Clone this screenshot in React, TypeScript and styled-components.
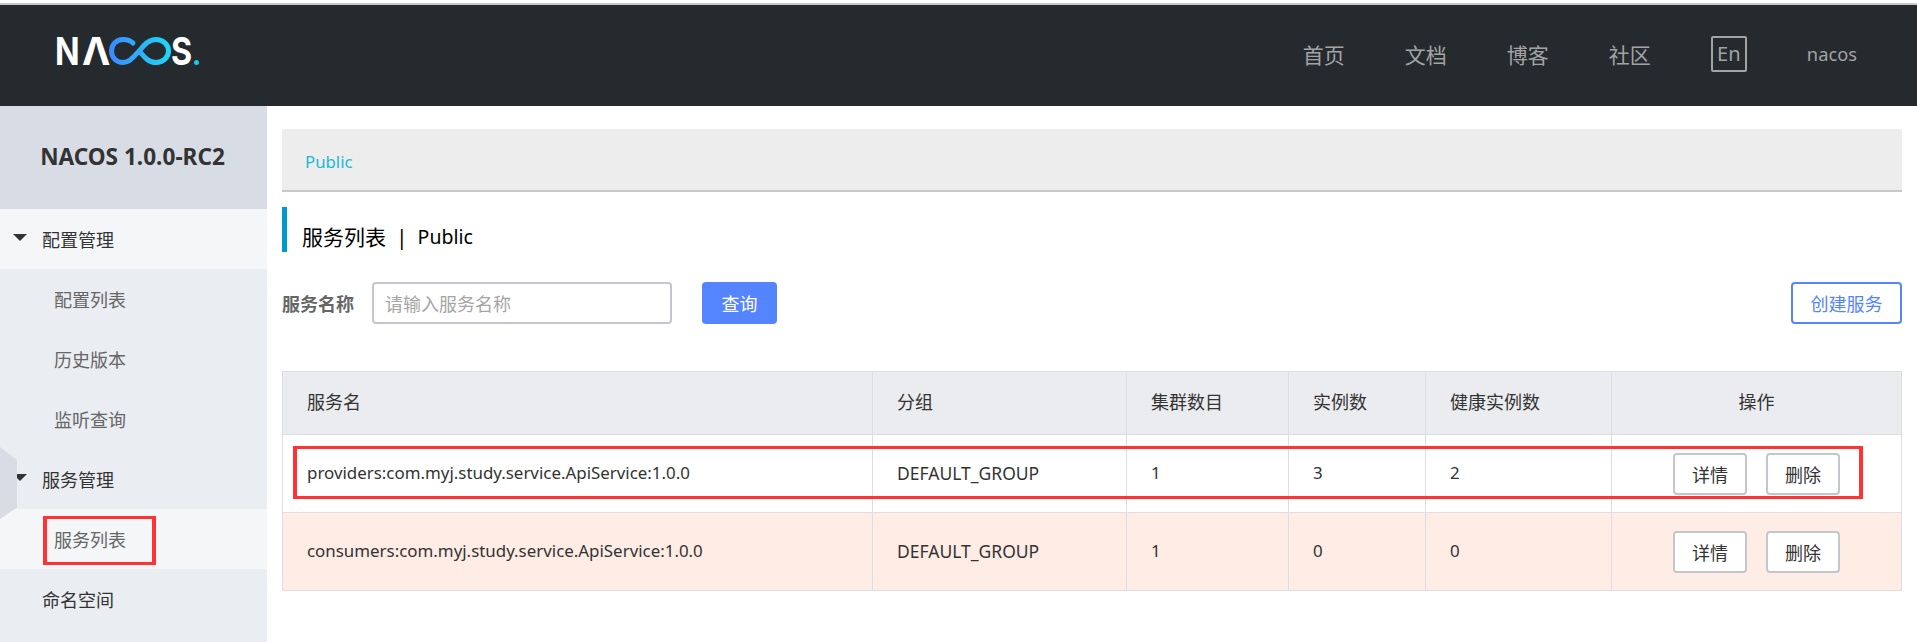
import React from "react";
import styled, { createGlobalStyle } from "styled-components";

const FONT = `"Noto Sans", "Noto Sans CJK SC", sans-serif`;

const Global = createGlobalStyle`
  html, body { margin: 0; padding: 0; background: #fff; }
  body { font-family: ${FONT}; width: 1917px; height: 642px; overflow: hidden; }
  * { box-sizing: border-box; }
`;

const Page = styled.div`
  width: 1917px;
  height: 642px;
  display: flex;
  flex-direction: column;
  padding-top: 3px;
`;
const Header = styled.header`
  height: 103px;
  flex: none;
  background: #252a2f;
  border-top: 2px solid #c8c8c8;
  display: flex;
  align-items: center;
  justify-content: space-between;
  padding: 0 60px 2px 55px;
`;
const Logo = styled.div`
  display: flex;
  align-items: flex-end;
  height: 28px;
  margin-top: -7px;
  color: #fff;
  font-family: "Inter", sans-serif;
  font-weight: 700;
  font-size: 38px;
  line-height: 28px;
`;
const LogoLetter = styled.span<{ $w: number; $sx: number }>`
  display: block;
  width: ${(p) => p.$w}px;
  height: 28px;
  line-height: 28px;
  transform: scaleX(${(p) => p.$sx});
  transform-origin: left center;
`;
const LogoMark = styled.svg`
  display: block;
  width: 62px;
  height: 28px;
  flex: none;
`;
const LogoDot = styled.span`
  width: 5px;
  height: 5px;
  border-radius: 50%;
  background: #19c8ea;
  margin-left: 3px;
`;
const Nav = styled.nav`
  display: flex;
  align-items: center;
  gap: 60px;
  color: #a3a3a3;
  font-size: 21px;
`;
const NavLink = styled.span`
  line-height: 30px;
`;
const LangBox = styled.span`
  width: 36px;
  height: 36px;
  border: 2px solid #a3a3a3;
  border-radius: 2px;
  display: flex;
  align-items: center;
  justify-content: center;
  font-size: 20px;
  margin-top: -2px;
`;
const UserName = styled.span`
  font-size: 18.3px;
  margin-top: -2px;
`;
const Body = styled.div`
  flex: 1;
  display: flex;
  min-height: 0;
`;
const Sidebar = styled.aside`
  width: 267px;
  flex: none;
  background: #eaedf1;
  position: relative;
  display: flex;
  flex-direction: column;
`;
const SideTitle = styled.div`
  height: 103px;
  background: #d8dce5;
  color: #333;
  font-weight: 700;
  font-size: 22.6px;
  display: flex;
  align-items: center;
  justify-content: center;
  padding: 0 2px 2px 0;
`;
const SideGroup = styled.div<{ $open?: boolean }>`
  height: 60px;
  flex: none;
  display: flex;
  align-items: center;
  padding-left: 42px;
  font-size: 18px;
  color: #333;
  background: ${(p) => (p.$open ? "#f4f6f8" : "transparent")};
  position: relative;
`;
const Caret = styled.i`
  position: absolute;
  left: 13px;
  top: 25px;
  width: 0;
  height: 0;
  border-left: 7px solid transparent;
  border-right: 7px solid transparent;
  border-top: 7px solid #333;
`;
const SideItem = styled.div<{ $active?: boolean }>`
  height: 60px;
  flex: none;
  display: flex;
  align-items: center;
  padding-left: 54px;
  font-size: 18px;
  color: #666;
  background: ${(p) => (p.$active ? "#f4f6f8" : "transparent")};
`;
const SideToggle = styled.div`
  position: absolute;
  left: 0;
  top: 341px;
  width: 17px;
  height: 72px;
  background: #d8dce5;
  clip-path: polygon(0 0, 100% 18%, 100% 84%, 0 100%);
`;
const RedMark = styled.div`
  position: absolute;
  border-style: solid;
  border-color: #ff3333;
  border-width: 3px 4px;
  pointer-events: none;
`;
const SideMark = styled(RedMark)`
  left: 43px;
  top: 410px;
  width: 113px;
  height: 49px;
`;
const Main = styled.main`
  flex: 1;
  min-width: 0;
  padding: 23px 15px 0 15px;
  position: relative;
`;
const Breadcrumb = styled.div`
  height: 63px;
  background: #ededed;
  border-bottom: 2px solid #c8c8c8;
  width: 1620px;
  padding: 21px 0 0 23px;
  color: #1eb8d8;
  font-size: 16.8px;
  line-height: 24px;
`;
const Title = styled.h1`
  margin: 15px 0 0;
  height: 45px;
  border-left: 5px solid #0099cc;
  padding: 16px 0 0 15px;
  font-size: 21px;
  font-weight: 400;
  line-height: 28px;
  color: #000;
  display: flex;
  gap: 10px;
`;
const TitleName = styled.span`
  font-size: 19.5px;
`;
const FormRow = styled.div`
  margin-top: 30px;
  width: 1620px;
  height: 42px;
  display: flex;
  align-items: center;
`;
const FieldLabel = styled.label`
  font-size: 18px;
  font-weight: 700;
  color: #666;
  width: 90px;
  flex: none;
`;
const SearchInput = styled.div`
  width: 300px;
  height: 42px;
  border: 2px solid #c4c6cf;
  border-radius: 4px;
  display: flex;
  align-items: center;
  padding-left: 11px;
  color: #a5a5a5;
  font-size: 18px;
`;
const Button = styled.button<{ $variant?: "primary" | "outline" }>`
  height: 42px;
  border-radius: 4px;
  font-family: ${FONT};
  font-size: 18px;
  padding: 0;
  background: ${(p) => (p.$variant === "primary" ? "#5584ff" : "#fff")};
  color: ${(p) => (p.$variant === "primary" ? "#fff" : p.$variant === "outline" ? "#5584ff" : "#333")};
  border: ${(p) => (p.$variant === "primary" ? "none" : p.$variant === "outline" ? "2px solid #5584ff" : "2px solid #c4c6cf")};
`;
const QueryButton = styled(Button)`
  width: 75px;
  margin-left: 30px;
`;
const CreateButton = styled(Button)`
  width: 111px;
  margin-left: auto;
`;
const Table = styled.div`
  margin-top: 47px;
  width: 1620px;
  border: 1px solid #dcdee3;
`;
const TRow = styled.div<{ $head?: boolean; $warn?: boolean }>`
  display: grid;
  grid-template-columns: 590px 254px 162px 137px 186px 1fr;
  height: ${(p) => (p.$head ? 62 : 78)}px;
  border-top: ${(p) => (p.$head ? "none" : "1px solid #dcdee3")};
  background: ${(p) => (p.$head ? "#ebecf0" : p.$warn ? "#ffece4" : "#fff")};
`;
const Cell = styled.div<{ $center?: boolean; $last?: boolean }>`
  display: flex;
  align-items: center;
  justify-content: ${(p) => (p.$center ? "center" : "flex-start")};
  padding: ${(p) => (p.$center ? "0" : "0 0 2px 24px")};
  font-size: 16.9px;
  color: #333;
  border-right: ${(p) => (p.$last ? "none" : "1px solid #dcdee3")};
  white-space: nowrap;
`;
const GroupCell = styled(Cell)`
  font-size: 17.5px;
`;
const HeadCell = styled(Cell)`
  font-size: 18px;
  padding-bottom: 4px;
`;
const Actions = styled(Cell)`
  gap: 19px;
`;
const ActionButton = styled(Button)`
  width: 74px;
`;
const RowMark = styled(RedMark)`
  left: 26px;
  top: 340px;
  width: 1570px;
  height: 53px;
`;

const rows = [
  { name: "providers:com.myj.study.service.ApiService:1.0.0", cluster: 1, inst: 3, healthy: 2 },
  { name: "consumers:com.myj.study.service.ApiService:1.0.0", cluster: 1, inst: 0, healthy: 0, warn: true },
];

export default function App() {
  return (
    <Page>
      <Global />
      <Header>
        <Logo aria-label="NACOS">
          <LogoLetter $w={27} $sx={0.85}>N</LogoLetter>
          <LogoLetter $w={27} $sx={1}>Λ</LogoLetter>
          <LogoMark viewBox="0 0 62 28">
            <defs>
              <linearGradient id="inf" x1="0" x2="1" y1="0" y2="0">
                <stop offset="0" stopColor="#3a8cff" />
                <stop offset="1" stopColor="#1fd6f4" />
              </linearGradient>
            </defs>
            <path
              d="M24 6 C21.5 3.5 18 2.5 14 2.5 C7.5 2.5 2.5 7.5 2.5 14 C2.5 20.5 7.5 25.5 14 25.5 C21 25.5 25 19 31 13 C36 7 40 2.5 47 2.5 C54 2.5 59.5 7.5 59.5 14 C59.5 20.5 54 25.5 47 25.5 C40 25.5 36 21 32 16"
              fill="none"
              stroke="url(#inf)"
              strokeWidth="5"
              strokeLinecap="round"
            />
          </LogoMark>
          <LogoLetter $w={20} $sx={0.85}>S</LogoLetter>
          <LogoDot />
        </Logo>
        <Nav>
          <NavLink>首页</NavLink>
          <NavLink>文档</NavLink>
          <NavLink>博客</NavLink>
          <NavLink>社区</NavLink>
          <LangBox>En</LangBox>
          <UserName>nacos</UserName>
        </Nav>
      </Header>
      <Body>
        <Sidebar>
          <SideTitle>NACOS 1.0.0-RC2</SideTitle>
          <SideGroup $open>
            <Caret />
            配置管理
          </SideGroup>
          <SideItem>配置列表</SideItem>
          <SideItem>历史版本</SideItem>
          <SideItem>监听查询</SideItem>
          <SideGroup>
            <Caret />
            服务管理
          </SideGroup>
          <SideItem $active>服务列表</SideItem>
          <SideGroup>命名空间</SideGroup>
          <SideToggle />
          <SideMark />
        </Sidebar>
        <Main>
          <Breadcrumb>Public</Breadcrumb>
          <Title>
            <span>服务列表</span>
            <span>|</span>
            <TitleName>Public</TitleName>
          </Title>
          <FormRow>
            <FieldLabel>服务名称</FieldLabel>
            <SearchInput>请输入服务名称</SearchInput>
            <QueryButton $variant="primary">查询</QueryButton>
            <CreateButton $variant="outline">创建服务</CreateButton>
          </FormRow>
          <Table>
            <TRow $head>
              <HeadCell>服务名</HeadCell>
              <HeadCell>分组</HeadCell>
              <HeadCell>集群数目</HeadCell>
              <HeadCell>实例数</HeadCell>
              <HeadCell>健康实例数</HeadCell>
              <HeadCell $center $last>操作</HeadCell>
            </TRow>
            {rows.map((r) => (
              <TRow key={r.name} $warn={r.warn}>
                <Cell>{r.name}</Cell>
                <GroupCell>DEFAULT_GROUP</GroupCell>
                <Cell>{r.cluster}</Cell>
                <Cell>{r.inst}</Cell>
                <Cell>{r.healthy}</Cell>
                <Actions $center $last>
                  <ActionButton>详情</ActionButton>
                  <ActionButton>删除</ActionButton>
                </Actions>
              </TRow>
            ))}
          </Table>
          <RowMark />
        </Main>
      </Body>
    </Page>
  );
}
